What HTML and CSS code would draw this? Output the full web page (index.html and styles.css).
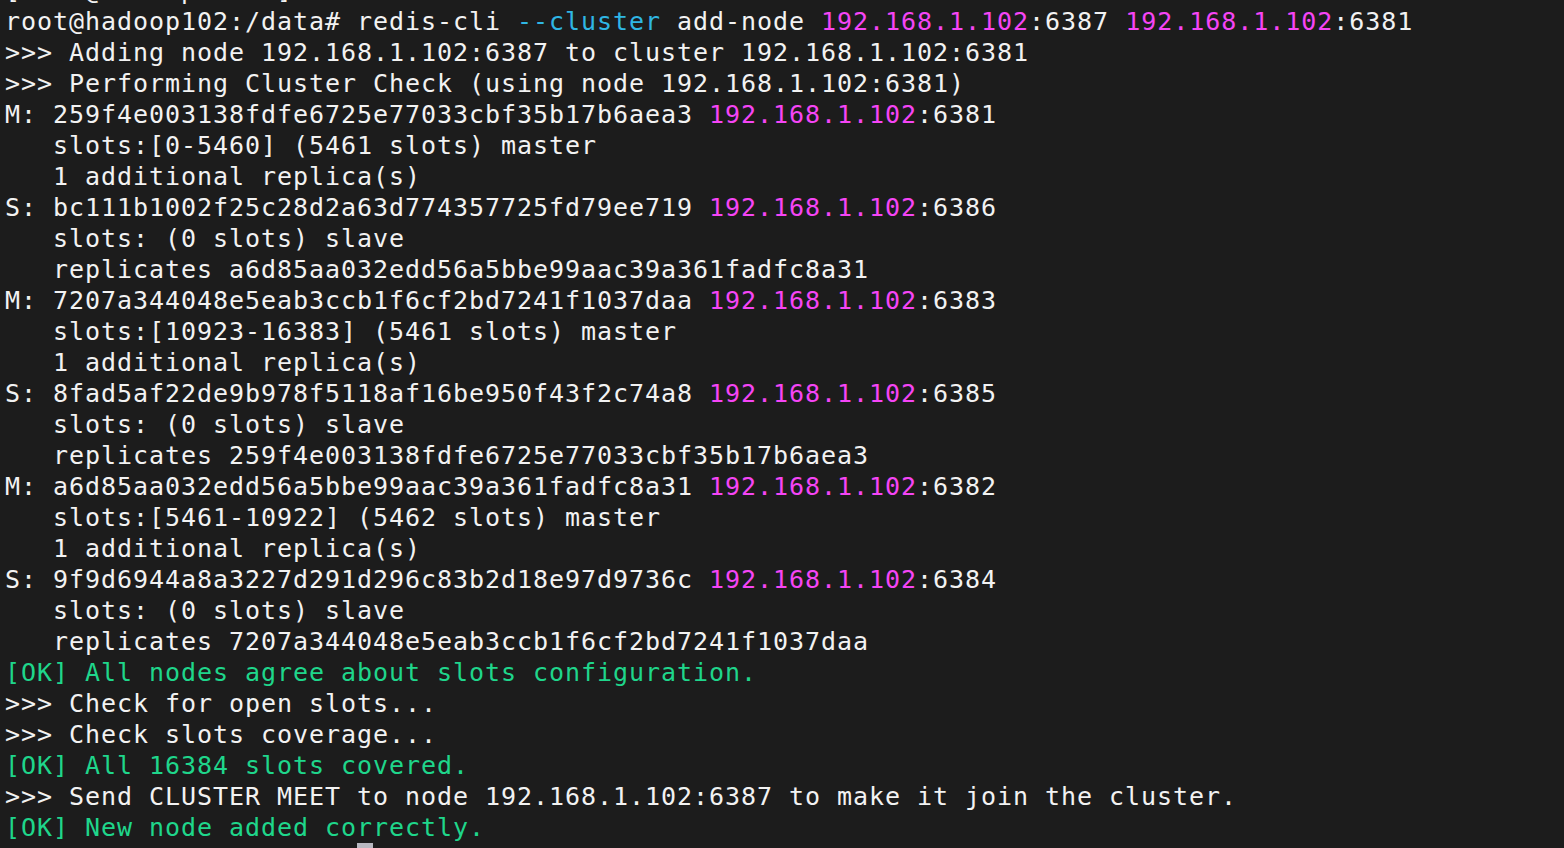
FILE: index.html
```html
<!DOCTYPE html>
<html lang="en">
<head>
<meta charset="utf-8">
<title>Terminal</title>
<link rel="stylesheet" href="styles.css">
</head>
<body>
<main class="term">
<div class="lines">
<div class="ln">[root@hadoop102 ~]# </div>
<div class="ln">root@hadoop102:/data# redis-cli <span class="cy">--cluster</span> add-node <span class="mg">192.168.1.102</span>:6387 <span class="mg">192.168.1.102</span>:6381</div>
<div class="ln">&gt;&gt;&gt; Adding node 192.168.1.102:6387 to cluster 192.168.1.102:6381</div>
<div class="ln">&gt;&gt;&gt; Performing Cluster Check (using node 192.168.1.102:6381)</div>
<div class="ln">M: 259f4e003138fdfe6725e77033cbf35b17b6aea3 <span class="mg">192.168.1.102</span>:6381</div>
<div class="ln">   slots:[0-5460] (5461 slots) master</div>
<div class="ln">   1 additional replica(s)</div>
<div class="ln">S: bc111b1002f25c28d2a63d774357725fd79ee719 <span class="mg">192.168.1.102</span>:6386</div>
<div class="ln">   slots: (0 slots) slave</div>
<div class="ln">   replicates a6d85aa032edd56a5bbe99aac39a361fadfc8a31</div>
<div class="ln">M: 7207a344048e5eab3ccb1f6cf2bd7241f1037daa <span class="mg">192.168.1.102</span>:6383</div>
<div class="ln">   slots:[10923-16383] (5461 slots) master</div>
<div class="ln">   1 additional replica(s)</div>
<div class="ln">S: 8fad5af22de9b978f5118af16be950f43f2c74a8 <span class="mg">192.168.1.102</span>:6385</div>
<div class="ln">   slots: (0 slots) slave</div>
<div class="ln">   replicates 259f4e003138fdfe6725e77033cbf35b17b6aea3</div>
<div class="ln">M: a6d85aa032edd56a5bbe99aac39a361fadfc8a31 <span class="mg">192.168.1.102</span>:6382</div>
<div class="ln">   slots:[5461-10922] (5462 slots) master</div>
<div class="ln">   1 additional replica(s)</div>
<div class="ln">S: 9f9d6944a8a3227d291d296c83b2d18e97d9736c <span class="mg">192.168.1.102</span>:6384</div>
<div class="ln">   slots: (0 slots) slave</div>
<div class="ln">   replicates 7207a344048e5eab3ccb1f6cf2bd7241f1037daa</div>
<div class="ln ok">[OK] All nodes agree about slots configuration.</div>
<div class="ln">&gt;&gt;&gt; Check for open slots...</div>
<div class="ln">&gt;&gt;&gt; Check slots coverage...</div>
<div class="ln ok">[OK] All 16384 slots covered.</div>
<div class="ln">&gt;&gt;&gt; Send CLUSTER MEET to node 192.168.1.102:6387 to make it join the cluster.</div>
<div class="ln ok">[OK] New node added correctly.</div>
<div class="ln">root@hadoop102:/data# <span class="cursor"> </span></div>
</div>
</main>
</body>
</html>
```

FILE: styles.css
```css
html, body {
  margin: 0;
  padding: 0;
  background: #1c1c1c;
  height: 100%;
  overflow: hidden;
}

.term {
  padding: 6px 0 0 5px;
  color: #f2f2f2;
  font-family: "DejaVu Sans Mono", monospace;
  font-size: 25px;
  letter-spacing: 0.95px;
  line-height: 31px;
}

.lines {
  margin-top: -31px;
}

.ln {
  white-space: pre;
  height: 31px;
}

.cy { color: #2fb6e4; }
.mg { color: #f545f5; }
.ok { color: #1fd68b; }

.cursor {
  display: inline-block;
  width: 16px;
  height: 31px;
  vertical-align: top;
  background: #b8b8c0;
}
```
